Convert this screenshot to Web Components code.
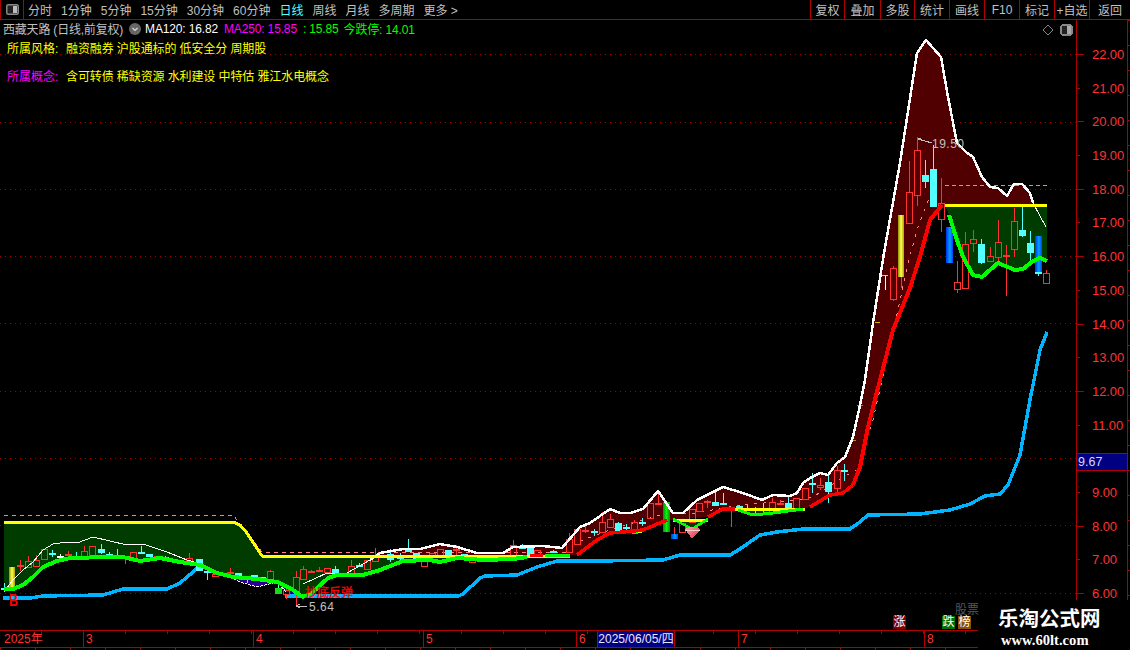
<!DOCTYPE html>
<html><head><meta charset="utf-8"><style>
html,body{margin:0;padding:0;background:#000;overflow:hidden}
body{font-family:"Liberation Sans","Noto Sans CJK SC",sans-serif;font-size:12px}
</style></head><body>
<tdx-app>
  <tdx-toolbar slot="top">
    <tdx-tab>分时</tdx-tab><tdx-tab>1分钟</tdx-tab><tdx-tab>5分钟</tdx-tab><tdx-tab>15分钟</tdx-tab><tdx-tab>30分钟</tdx-tab><tdx-tab>60分钟</tdx-tab><tdx-tab active>日线</tdx-tab><tdx-tab>周线</tdx-tab><tdx-tab>月线</tdx-tab><tdx-tab>多周期</tdx-tab><tdx-tab>更多 &gt;</tdx-tab>
    <tdx-btn slot="right" w="34">复权</tdx-btn><tdx-btn slot="right" w="36">叠加</tdx-btn><tdx-btn slot="right" w="34">多股</tdx-btn><tdx-btn slot="right" w="35">统计</tdx-btn><tdx-btn slot="right" w="35">画线</tdx-btn><tdx-btn slot="right" w="35">F10</tdx-btn><tdx-btn slot="right" w="35">标记</tdx-btn><tdx-btn slot="right" w="35">+自选</tdx-btn><tdx-btn slot="right" w="41">返回</tdx-btn>
  </tdx-toolbar>
  <tdx-chart slot="chart"></tdx-chart>
  <tdx-axis slot="axis"></tdx-axis>
  <tdx-timebar slot="time"></tdx-timebar>
  <tdx-watermark slot="mark"></tdx-watermark>
</tdx-app>
<script>
const FONT='"Liberation Sans","Noto Sans CJK SC",sans-serif';
function shadow(el,html){el.attachShadow({mode:'open'}).innerHTML=html;}

customElements.define('tdx-app',class extends HTMLElement{constructor(){super();shadow(this,`<style>
:host{display:block;position:relative;width:1130px;height:650px;background:#000;overflow:hidden;font-family:${FONT}}
.main{display:flex;height:610px}
</style><slot name="top"></slot><div class="main"><slot name="chart"></slot><slot name="axis"></slot></div><slot name="time"></slot><slot name="mark"></slot>`);}});

customElements.define('tdx-toolbar',class extends HTMLElement{constructor(){super();shadow(this,`<style>
:host{display:flex;height:19px;border-bottom:1px solid #b00000;color:#c0c0c0;font-size:12px;box-sizing:content-box}
.ico{width:22px;border-left:1px solid #b00000;border-right:1px solid #b00000;display:flex;align-items:center;justify-content:center}
.tabs{display:flex;flex:1;padding-left:4px;gap:9px}
.right{display:flex}
</style><div class="ico"><svg width="13" height="11" viewBox="0 0 13 11"><rect x=".75" y=".75" width="11.5" height="9.5" rx="1.5" fill="#222" stroke="#888" stroke-width="1.5"/><rect x="7" y="2" width="4" height="7" fill="#bbb"/></svg></div>
<div class="tabs"><slot></slot></div><div class="right"><slot name="right"></slot></div>`);}});

customElements.define('tdx-tab',class extends HTMLElement{constructor(){super();shadow(this,`<style>
:host{display:flex;align-items:center;white-space:nowrap;letter-spacing:0;color:#c0c0c0}
:host([active]){color:#54ffff}
</style><slot></slot>`);}});

customElements.define('tdx-btn',class extends HTMLElement{constructor(){super();shadow(this,`<style>
:host{display:flex;align-items:center;justify-content:center;border-left:1px solid #b00000;box-sizing:border-box;white-space:nowrap;color:#c0c0c0;width:${this.getAttribute('w')}px}
</style><slot></slot>`);}});

customElements.define('tdx-info',class extends HTMLElement{constructor(){super();shadow(this,`<style>
:host{display:block;position:relative;font-size:12px;padding:0 0 0 3px;height:100%;box-sizing:border-box}
.l1{display:flex;align-items:center;height:17px;color:#c0c0c0;white-space:nowrap}
.k{display:inline-block;width:12px;height:12px;border-radius:50%;background:#666;margin:0 4px 0 6px;flex:none}
.n{letter-spacing:-.2px}
.l2,.l3{display:flex;white-space:pre;padding-left:4px;height:18px;align-items:center;color:#ff0}
.l2{margin-top:1px}.l3{margin-top:10px}
.t{width:59px}
.v{letter-spacing:-.1px}
.w{color:#fff;letter-spacing:-.15px}.m{color:#f0f;letter-spacing:-.15px}.g{color:#00ff00;letter-spacing:-.15px}
svg{display:block}
</style>
<div class="l1"><span class="n">西藏天路 (日线,前复权)</span><span class="k"><svg width="12" height="12"><path d="M3.5 5 6 7.5 8.5 5" fill="none" stroke="#ddd" stroke-width="1.2"/></svg></span><span class="w">MA120: 16.82</span><span class="m" style="margin-left:6px">MA250: 15.85</span><span class="g" style="margin-left:6px">: 15.85</span><span class="g" style="margin-left:5px">今跌停: 14.01</span></div>
<div class="l2"><span class="t">所属风格:</span><span class="v">融资融券 沪股通标的 低安全分 周期股</span></div>
<div class="l3"><span class="t" style="color:#f0f">所属概念:</span><span class="v">含可转债 稀缺资源 水利建设 中特估 雅江水电概念</span></div>`);}});

const C=[ // x, wickTop, bodyTop, bodyBot, wickBot, type
[4,583,588,588,592,'c'],[20,560,565,565,571,'f'],[28,556,561,567,567,'r'],[36,555,560,566,566,'r'],[44,549,549,559,559,'r'],[52,550,553,554,557,'c'],[60,554,556,556,559,'w'],[68,551,554,556,556,'f'],[76,552,556,556,557,'c'],[84,546,551,557,557,'r'],[92,546,546,555,555,'r'],[101,544,549,553,554,'c'],[109,552,554,555,556,'c'],[117,549,555,555,556,'c'],[125,557,557,558,564,'f'],[133,552,552,558,558,'r'],[141,546,552,553,553,'c'],[149,554,554,557,557,'c'],[157,556,556,557,557,'f'],[165,556,557,558,558,'c'],[173,559,559,561,561,'c'],[181,561,561,563,563,'c'],[189,553,558,561,561,'r'],[199,559,559,571,571,'c'],[207,568,571,573,580,'c'],[215,574,574,576,576,'r'],[230,568,572,574,574,'f'],[238,573,573,576,576,'c'],[247,578,578,580,583,'c'],[254,575,575,578,578,'c'],[262,577,577,580,580,'c'],[270,570,571,580,580,'r'],[278,580,589,589,589,'c'],[286,588,590,594,599,'r'],[296,571,577,591,607,'r'],[303,566,569,579,579,'r'],[311,570,571,572,573,'f'],[319,567,570,571,571,'f'],[327,568,568,572,572,'r'],[335,566,569,573,573,'c'],[351,560,566,573,573,'r'],[359,563,565,567,567,'c'],[367,560,560,569,569,'r'],
[375,548,555,561,561,'r'],[390,549,554,560,562,'c'],[400,553,557,557,562,'c'],[408,539,548,552,552,'c'],[416,553,553,559,559,'c'],[424,560,560,566,566,'r'],[432,553,553,557,557,'r'],[440,549,549,556,556,'r'],[448,550,550,557,557,'c'],[456,545,549,551,555,'f'],[464,554,554,557,557,'c'],[472,557,557,562,562,'r'],[488,555,557,558,558,'r'],[497,557,557,559,559,'r'],[504,555,556,557,557,'c'],[513,540,545,557,557,'r'],[522,544,546,549,549,'c'],[530,548,548,555,555,'c'],[537,550,550,557,557,'r'],[553,550,551,553,553,'c'],
[569,533,539,552,552,'r'],[577,529,529,544,544,'r'],[585,525,530,530,533,'f'],[594,529,531,531,536,'c'],[602,512,522,532,532,'r'],[610,514,519,527,527,'r'],[618,522,523,532,532,'c'],[626,524,527,527,530,'c'],[634,520,522,529,529,'r'],[642,518,522,522,526,'c'],[650,503,503,518,518,'r'],[658,493,503,504,505,'f'],[682,523,523,532,532,'r'],[692,509,509,522,522,'r'],[699,503,503,511,511,'r'],[707,500,501,501,508,'f'],[715,490,502,506,506,'c'],[723,493,503,503,504,'c'],[731,507,508,508,527,'f'],[739,505,506,509,509,'c'],[747,505,508,508,510,'c'],[755,507,508,511,515,'c'],[763,503,508,508,513,'c'],[772,498,502,512,512,'r'],[780,500,503,503,505,'f'],[788,497,503,509,509,'c'],[796,498,498,508,508,'r'],[805,488,488,499,499,'r'],[812,473,483,483,493,'c'],[820,478,485,487,490,'r'],[828,475,482,492,503,'c'],[837,466,470,488,492,'r'],[844,464,470,470,481,'c'],
[893,266,268,299,301,'r'],[909,161,192,223,223,'r'],[917,137,150,195,206,'r'],[925,160,175,182,188,'c'],[933,145,169,207,207,'c'],[941,178,203,219,232,'r'],[957,261,282,289,293,'r'],[965,232,244,288,288,'r'],[973,230,239,243,252,'r'],[981,239,244,263,264,'c'],[990,247,256,261,261,'r'],[998,220,242,257,261,'r'],[1006,245,255,257,296,'f'],[1014,208,221,249,257,'r'],[1022,206,230,236,237,'c'],[1030,231,243,253,260,'c'],[1038,272,272,272,276,'c'],[1046,270,273,283,284,'r']
];
const P=a=>a.map(p=>p.join(',')).join(' ');
const white=[[370,560],[380,553],[403,549],[420,549],[440,544],[457,547],[477,553],[503,553],[513,547],[543,546],[562,548],[580,527],[590,523],[610,509],[620,513],[630,513],[643,509],[658,491],[673,513],[683,513],[697,500],[723,487],[743,493],[762,500],[773,495],[790,496],[797,493],[803,483],[812,477],[820,473],[828,475],[837,463],[845,457],[853,437],[860,405],[865,380],[873,323],[884,253],[900,163],[917,53],[926,40],[941,57],[948,97],[957,143],[967,153],[973,157],[982,177],[990,187],[998,188],[1007,196],[1014,184],[1022,184],[1030,193],[1033,203]];
const redUp=[[853,485],[860,467],[868,427],[880,380],[893,330],[910,288],[920,257],[930,220],[942,205]];
const redA=[[577,555],[597,540],[610,533],[623,532],[643,530],[667,520]];
const redB=[[708,517],[723,509],[735,509]];
const redC=[[810,507],[830,495],[843,493],[853,485]];
const greenL=[[4,589],[13,589],[23,585],[33,577],[43,567],[57,561],[70,558],[110,557],[123,557],[140,561],[160,558],[180,562],[200,565],[217,573],[233,577],[257,579],[277,582],[290,588],[303,597],[313,592],[328,578],[337,575],[363,575],[380,570],[403,561],[430,560],[440,562],[457,558],[483,560],[513,559],[527,557]];
const yellowL=[[4,522],[233,522],[240,525],[247,533],[262,556],[570,556]];
const greenEnd=[[949,215],[957,240],[963,257],[973,275],[982,277],[998,263],[1015,270],[1023,269],[1033,261],[1040,258],[1047,261]];
const blue1=[[3,598],[30,598],[43,596],[103,595],[113,592],[123,589],[167,589],[180,583],[193,572],[199,566]];
const blue2=[[285,596],[458,596],[463,594],[480,578],[485,576],[517,575],[537,567],[557,561],[597,561],[663,560],[680,555],[730,555],[740,549],[760,535],[777,532],[803,529],[850,529],[860,522],[868,515],[920,514],[950,510],[970,504],[985,496],[1000,494],[1008,485],[1020,455],[1030,400],[1040,350],[1047,332]];
const thinW=[[4,592],[13,580],[23,570],[33,562],[43,550],[53,544],[67,542],[77,543],[93,537],[110,541],[127,545],[143,544],[167,552],[187,560],[198,563]];

customElements.define('tdx-chart',class extends HTMLElement{constructor(){super();
 let grid='';[54,122,189,256,323,391,458,525,593].forEach(y=>grid+=`<line x1="0" x2="1076" y1="${y}.5" y2="${y}.5" stroke="#a00000" stroke-dasharray="1 4"/>`);
 let candles='';
 const R='#ff3232',Cy='#54ffff';
 C.forEach(([x,wt,bt,bb,wb,t])=>{
  const col=t=='c'?Cy:t=='w'?'#fff':R, X=x+.5;
  if(wt<bt)candles+=`<line x1="${X}" x2="${X}" y1="${wt}" y2="${bt}" stroke="${col}"/>`;
  if(wb>bb)candles+=`<line x1="${X}" x2="${X}" y1="${bb}" y2="${wb}" stroke="${col}"/>`;
  if(bb-bt<1.5)candles+=`<rect x="${x-3}" y="${bt}" width="7" height="1.6" fill="${col}"/>`;
  else if(t=='r')candles+=`<rect x="${x-2.5}" y="${bt+.5}" width="6" height="${bb-bt}" fill="none" stroke="${R}"/>`;
  else candles+=`<rect x="${x-3}" y="${bt}" width="7" height="${bb-bt}" fill="${col}"/>`;
 });
 const area=[...white,[1047,205],[945,205],...redUp.slice().reverse(),[835,494],...redC.slice().reverse(),[803,509],[735,509],...redB.slice().reverse(),[673,520],...redA.slice().reverse(),[530,556],[370,556]];
 const line=(pts,c,w=3,extra='')=>`<polyline points="${P(pts)}" fill="none" stroke="${c}" stroke-width="${w}" stroke-linejoin="round" ${extra}/>`;
 shadow(this,`<style>
:host{display:block;position:relative;width:1076px;height:610px;flex:none}
svg{position:absolute;left:0;top:0;shape-rendering:crispEdges}
text{font-family:${FONT}}
.ov{position:absolute;left:0;top:0;width:100%}
</style>
<svg width="1076" height="610" viewBox="0 20 1076 610">
<defs>
<linearGradient id="gy"><stop offset="0" stop-color="#909000"/><stop offset=".5" stop-color="#ffff50"/><stop offset="1" stop-color="#b0a000"/></linearGradient>
<linearGradient id="gb"><stop offset="0" stop-color="#0030f0"/><stop offset=".55" stop-color="#00a0ff"/><stop offset="1" stop-color="#0040f0"/></linearGradient>
<linearGradient id="gg"><stop offset="0" stop-color="#009000"/><stop offset=".5" stop-color="#10f010"/><stop offset="1" stop-color="#009000"/></linearGradient>
<linearGradient id="gem" x1="0" y1="0" x2="1" y2="1"><stop offset="0" stop-color="#ffb0b0"/><stop offset="1" stop-color="#e02040"/></linearGradient>
</defs>
${grid}
<polygon points="${P(area)}" fill="#500000"/>
<polygon points="${P([...yellowL.slice(0,5),[527,556],...greenL.slice().reverse()])}" fill="#003c00"/>
<polygon points="945,205 1047,205 ${P(greenEnd.slice().reverse())}" fill="#003c00"/>
<polygon points="673,520 708,520 692,529" fill="#003c00"/>
<polygon points="735,509 803,509 773,513 753,515 740,511" fill="#003c00"/>
<polygon points="205,568 217,573 233,577 257,579 277,582 290,588 300,596 287,592 277,583 257,587 240,582 225,575" fill="#2c0090"/>
${line([[4,515],[233,515],[262,552],[570,552]],'#ff8080',1,'stroke-dasharray="4 4"')}
${line([[945,185],[1047,185]],'#ff8080',1,'stroke-dasharray="4 3"')}
${line([[580,541],[610,530],[650,518],[670,512],[690,514],[740,505],[800,500],[813,497],[847,475],[857,470],[873,420],[898,310],[907,267],[917,230],[927,203],[933,193]],'#ff8080',1,'stroke-dasharray="3 6"')}
${line(blue1,'#00b4ff',3.5)}${line(blue2,'#00b4ff',3.5)}
${candles}
<rect x="9" y="567" width="6" height="20" fill="url(#gy)"/>
<rect x="898" y="215" width="6" height="62" fill="url(#gy)"/><line x1="901.5" x2="901.5" y1="277" y2="288" stroke="${R}"/>
<rect x="946" y="227" width="7" height="36" fill="url(#gb)"/>
<rect x="1035" y="236" width="7" height="36" fill="url(#gb)"/>
<rect x="663" y="502" width="7" height="30" fill="url(#gg)"/>
<rect x="671" y="534" width="7" height="5" fill="url(#gb)"/><line x1="674.5" x2="674.5" y1="527" y2="534" stroke="${R}"/>
<rect x="275" y="588" width="7" height="6" fill="#10e010"/>
<rect x="882" y="275" width="6" height="1" fill="#e0e000"/><line x1="885.5" x2="885.5" y1="276" y2="290" stroke="#fff"/>
<rect x="875" y="322" width="5" height="1" fill="#c0c000"/><rect x="857" y="405" width="6" height="1" fill="#a0a000"/><rect x="850" y="440" width="6" height="1" fill="#a0a000"/>
${line(white,'#fff',2.5)}
${line([[1033,203],[1046,227]],'#fff',1)}
${line(thinW,'#fff',1)}
${line([[230,577],[240,582],[257,587],[277,582],[287,593]],'#fff',1,'stroke-dasharray="3 1"')}
${line([[303,584],[327,573],[347,573],[370,560]],'#fff',1)}
${line([[4,522],[233,522],[240,525],[247,533],[262,556],[570,556]],'#ffff00',3)}
${line([[945,205],[1047,205]],'#ffff00',3)}
${line([[673,520],[708,520]],'#ffff00',3)}${line([[733,509],[805,509]],'#ffff00',3)}
${line([[627,532],[642,531]],'#ffff00',3)}
${line(greenL,'#00ff00',4)}
${line([[545,555],[570,556]],'#00ff00',3)}
${line([[632,532],[638,532]],'#00ff00',3)}
${line([[530,556],[543,555]],'#ff0000',3)}
${line(greenEnd,'#00ff00',4)}
${line([[673,519],[692,529],[708,519]],'#00ff00',2.5)}
${line([[738,510],[753,515],[773,513],[803,509]],'#00ff00',3)}
${line(redA,'#ff0000',3.5)}${line(redB,'#ff0000',3.5)}${line(redC,'#ff0000',3.5)}${line(redUp,'#ff0000',4)}
<polygon points="685,529 689,527 697,527 700,530 692,539" fill="url(#gem)"/>
<polyline points="685,530 700,530" stroke="#ffd0d0" fill="none"/>
<text x="9" y="606" fill="#ff0000" font-size="17" font-weight="bold" textLength="9" lengthAdjust="spacingAndGlyphs">B</text>
<text x="305" y="597" fill="#ff0000" stroke="#ff0000" stroke-width=".3" font-size="12">抄底反弹</text>
<path d="M296 606H307M296 606l4-2M296 606l4 2" stroke="#c0c0c0" fill="none"/>
<text x="309" y="611" fill="#c0c0c0" font-size="12" letter-spacing=".5">5.64</text>
<path d="M918 140v-2h3M918 139l14 4" stroke="#c0c0c0" fill="none"/>
<text x="932" y="148" fill="#c0c0c0" font-size="12" letter-spacing=".5">19.50</text>
<path d="M1048 25l5 5-5 5-5-5z" fill="none" stroke="#888"/>
<rect x="1061" y="25" width="11" height="10" rx="1.5" fill="#222" stroke="#888" stroke-width="1.5"/><rect x="1067" y="26" width="4" height="8" fill="#aaa"/>
</svg>
<div class="ov"><tdx-info></tdx-info></div>
`);}});

customElements.define('tdx-axis',class extends HTMLElement{constructor(){super();
 let rows='';for(let v=22;v>=6;v--){rows+=`<div class="r ${v%2?'odd':''}"><i></i><span>${v==10?'':v.toFixed(2)}</span></div>`;}
 shadow(this,`<style>
:host{display:block;position:relative;flex:1;border-left:1px solid #b00000;box-sizing:border-box;height:610px;color:#ff3232;font-size:13px;
 background:linear-gradient(#b00000,#b00000) 50px 0/1px 100% no-repeat, repeating-linear-gradient(#b00000 0 1px,transparent 1px 25px) 50px 0/4px 100% no-repeat}
.list{padding-top:17.7px}
.r{height:33.69px;display:flex;align-items:center;position:relative}
.r i{display:block;width:7px;height:1px;background:#b00000;flex:none}
.r.odd i{width:3px}
.r span{position:absolute;left:15px;letter-spacing:-.1px}
.val{position:absolute;left:0;top:433px;height:16px;background:#000080;border:1px solid #b00000;border-left:0;border-right:0;color:#d8d8ff;line-height:16px;padding-left:1px;width:49px;font-size:12.5px}
</style><div class="list">${rows}</div><div class="val">9.67</div>`);}});

customElements.define('tdx-timebar',class extends HTMLElement{constructor(){super();
 shadow(this,`<style>
:host{display:block;position:relative;width:978px;height:16px;border-top:1px solid #b00000;border-bottom:1px solid #b00000;color:#ff3232;font-size:12px}
.row{display:flex;height:16px;align-items:center;background:repeating-linear-gradient(90deg,#b00000 0 1px,transparent 1px 42px) 41px 0/100% 3px no-repeat}
.s{border-left:1px solid #b00000;height:16px;box-sizing:border-box;padding-left:2px;line-height:16px;flex:none}
.s:first-child{border:0;padding-left:4px}
.d{position:absolute;left:597px;top:0;width:78px;height:16px;background:#000080;color:#e8e8ff;border-left:1px solid #b00000;border-right:1px solid #b00000;box-sizing:border-box;line-height:16px;text-align:center;white-space:nowrap;font-size:12px}
.tick{position:absolute;left:0;top:17px;width:100%;height:3px;background:repeating-linear-gradient(90deg,#b00000 0 1px,transparent 1px 35px) 0 0}
</style><div class="row"><div class="s" style="width:83px">2025年</div><div class="s" style="width:170px">3</div><div class="s" style="width:170px">4</div><div class="s" style="width:153px">5</div><div class="s" style="width:162px">6</div><div class="s" style="width:186px">7</div><div class="s" style="width:54px">8</div></div><div class="d">2025/06/05/四</div><div class="tick"></div>`);}});

customElements.define('tdx-badge',class extends HTMLElement{constructor(){super();shadow(this,`<style>
:host{display:flex;align-items:center;justify-content:center;width:13px;height:13px;color:#fff;font-size:12px;line-height:13px;background:${this.getAttribute('bg')}}
</style><slot></slot>`);}});

customElements.define('tdx-watermark',class extends HTMLElement{constructor(){super();shadow(this,`<style>
:host{display:block;position:absolute;left:893px;top:600px;width:237px;height:50px}
.bg{position:absolute;left:85px;top:0;width:152px;height:50px;background:#000}
.stock{position:absolute;left:62px;top:4px;color:#555;font-size:12px;line-height:12px}
.badge{position:absolute;top:16px}
.a{position:absolute;left:105px;top:8px;color:#fff;font:bold 20.5px/22px "Liberation Serif","Noto Sans CJK SC",serif;white-space:nowrap}
.b{position:absolute;left:108px;top:33px;color:#fff;font:bold 14.6px/14px "Liberation Serif",serif;white-space:nowrap}
</style><div class="bg"></div><span class="stock">股票</span>
<tdx-badge class="badge" bg="#800000" style="left:0">涨</tdx-badge><tdx-badge class="badge" bg="#007000" style="left:49px">跌</tdx-badge><tdx-badge class="badge" bg="#8a5000" style="left:65px">榜</tdx-badge>
<div class="a">乐淘公式网</div><div class="b">www.60lt.com</div>`);}});
</script>
</body></html>
